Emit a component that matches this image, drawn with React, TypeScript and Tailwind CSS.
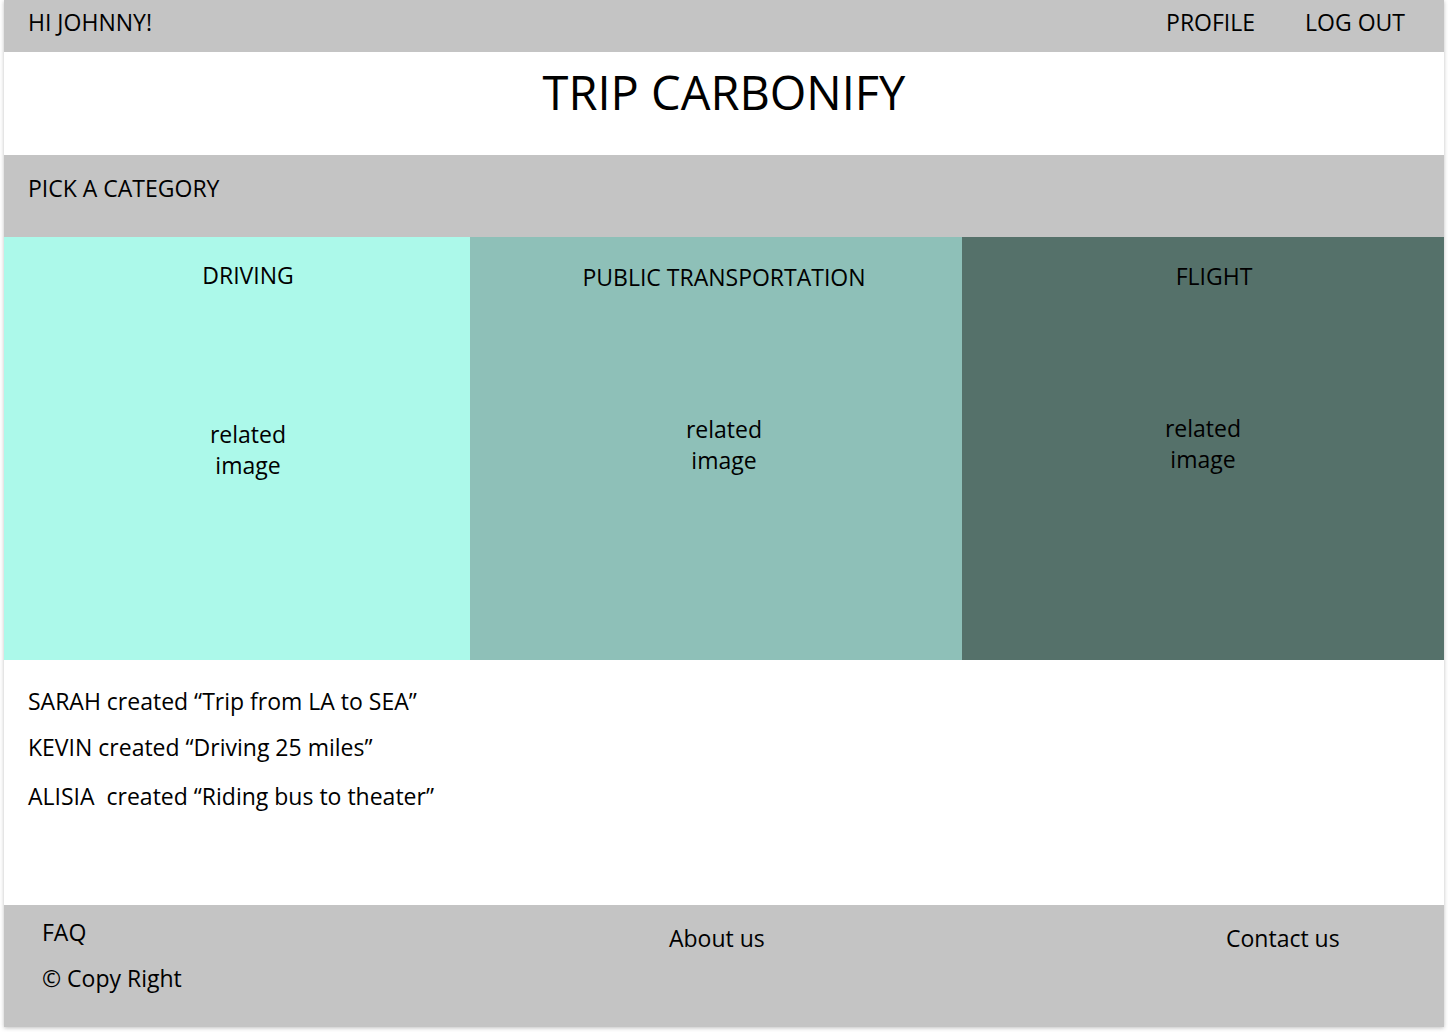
export default function App() {
  const feed = [
    { who: "SARAH", what: "“Trip from LA to SEA”", gap: "" },
    { who: "KEVIN", what: "“Driving 25 miles”", gap: "" },
    { who: "ALISIA", what: "“Riding bus to theater”", gap: "\u00a0" },
  ];

  return (
    <div className="min-h-screen bg-white" style={{ fontFamily: "'Open Sans', 'Noto Sans', sans-serif" }}>
      <div className="ml-[4px] w-[1440px] flex flex-col text-black shadow-[0_1px_4px_rgba(0,0,0,0.25)] text-[23px] leading-[31px]">
        {/* top bar */}
        <div className="h-[52px] bg-[#c4c4c4] flex items-center justify-between pl-[24px] pr-[39px] pb-[7px]">
          <span>HI JOHNNY!</span>
          <div className="flex gap-[50px]">
            <span>PROFILE</span>
            <span>LOG OUT</span>
          </div>
        </div>

        {/* title */}
        <div className="h-[103px] flex items-center justify-center pb-[24px]">
          <h1 className="text-[47px] leading-[60px]">TRIP CARBONIFY</h1>
        </div>

        <div className="h-[82px] bg-[#c4c4c4] pl-[24px] pt-[18px]">PICK A CATEGORY</div>

        {/* categories */}
        <div className="h-[423px] flex">
          <div className="w-[466px] bg-[#acf9ea] flex flex-col items-center pl-[22px]">
            <div className="pt-[23px]">DRIVING</div>
            <div className="mt-[128px] text-center">
              related
              <br />
              image
            </div>
          </div>
          <div className="w-[492px] bg-[#8ec0b8] flex flex-col items-center pl-[16px]">
            <div className="pt-[25px]">PUBLIC TRANSPORTATION</div>
            <div className="mt-[121px] text-center">
              related
              <br />
              image
            </div>
          </div>
          <div className="w-[482px] bg-[#55716a] flex flex-col items-center">
            <div className="pt-[24px] pl-[22px]">FLIGHT</div>
            <div className="mt-[121px] text-center">
              related
              <br />
              image
            </div>
          </div>
        </div>

        {/* recent activity */}
        <div className="h-[245px] pl-[24px] pt-[26px] flex flex-col">
          {feed.map((f, i) => (
            <div key={f.who} className={i === 0 ? "" : i === 1 ? "mt-[15px]" : "mt-[18px]"}>
              {f.who}
              {f.gap} created {f.what}
            </div>
          ))}
        </div>

        {/* footer */}
        <div className="h-[122px] bg-[#c4c4c4] flex">
          <div className="w-[665px] pl-[38px] pt-[12px] flex flex-col gap-[15px]">
            <span>FAQ</span>
            <span>© Copy Right</span>
          </div>
          <div className="w-[557px] pt-[18px]">About us</div>
          <div className="pt-[18px]">Contact us</div>
        </div>
      </div>
    </div>
  );
}
